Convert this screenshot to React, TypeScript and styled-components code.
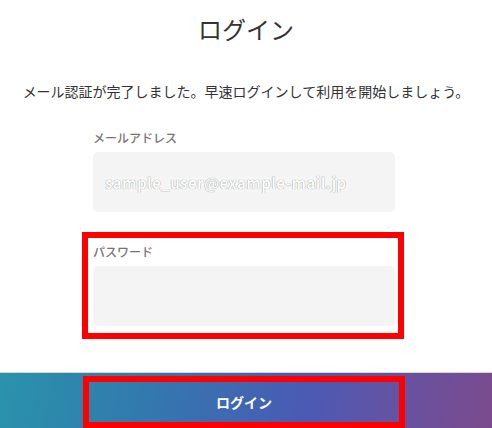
import React from "react";
import styled, { createGlobalStyle } from "styled-components";

const GlobalStyle = createGlobalStyle`
  html, body {
    margin: 0;
    padding: 0;
    background: #ffffff;
    font-family: "Noto Sans CJK JP", "Noto Sans", sans-serif;
    color: #333333;
  }
  * { box-sizing: border-box; }
`;

const Page = styled.div`
  display: flex;
  flex-direction: column;
  width: 100%;
  min-height: 428px;
`;

const Main = styled.main`
  display: flex;
  flex-direction: column;
  padding-top: 12px;
  height: 372px;
`;

const Title = styled.h1`
  margin: 0;
  text-align: center;
  font-size: 24px;
  line-height: 34px;
  font-weight: 400;
  color: #333333;
`;

const Lead = styled.p`
  margin: 35px 0 0;
  text-align: center;
  font-size: 14px;
  line-height: 20px;
  color: #333333;
`;

const FormColumn = styled.div`
  width: 322px;
  margin: 29px 0 0 calc(50% - 164px);
  display: flex;
  flex-direction: column;
  gap: 20px;
`;

const FieldGroup = styled.div<{ $highlight?: boolean }>`
  display: flex;
  flex-direction: column;
  gap: 6px;
  border: ${(p) => (p.$highlight ? "6px solid #ff0000" : "none")};
  padding: ${(p) => (p.$highlight ? "6px 3px 7px 5px" : "0 9px 0 11px")};
`;

const Label = styled.label`
  font-size: 12px;
  line-height: 16px;
  color: #7a7272;
  font-weight: 500;
`;

const Input = styled.input`
  width: 302px;
  height: 60px;
  border: none;
  border-radius: 5px;
  background: #f4f4f4;
  padding: 0 12px;
  font-family: inherit;
  font-size: 14px;
  outline: none;
`;

const BlurredInput = styled(Input)`
  color: #ffffff;
  font-weight: 700;
  font-size: 15px;
  letter-spacing: 0.4px;
  text-shadow: 0 0 1px #555, 0 0 3px #ffffff, 0 0 5px #ffffff, 0 0 6px #ffffff;
`;

const Footer = styled.footer`
  border-top: 1px solid #d6d6d6;
  height: 56px;
  padding-top: 3px;
  background: linear-gradient(
    100deg,
    #2a93ab 0%,
    #3279ae 30%,
    #4a5ab4 62%,
    #6852a0 82%,
    #7b4a8c 100%
  );
`;

const ButtonFrame = styled.div`
  width: 322px;
  margin-left: calc(50% - 163px);
  border: 6px solid #ff0000;
`;

const LoginButton = styled.button`
  display: block;
  width: 100%;
  height: 40px;
  border: none;
  background: transparent;
  color: #ffffff;
  font-family: inherit;
  font-size: 14px;
  font-weight: 700;
  cursor: pointer;
`;

export default function App() {
  return (
    <>
      <GlobalStyle />
      <Page>
        <Main>
          <Title>ログイン</Title>
          <Lead>メール認証が完了しました。早速ログインして利用を開始しましょう。</Lead>
          <FormColumn>
            <FieldGroup>
              <Label>メールアドレス</Label>
              <BlurredInput readOnly value="sample_user@example-mail.jp" />
            </FieldGroup>
            <FieldGroup $highlight>
              <Label>パスワード</Label>
              <Input type="password" readOnly value="" />
            </FieldGroup>
          </FormColumn>
        </Main>
        <Footer>
          <ButtonFrame>
            <LoginButton>ログイン</LoginButton>
          </ButtonFrame>
        </Footer>
      </Page>
    </>
  );
}
